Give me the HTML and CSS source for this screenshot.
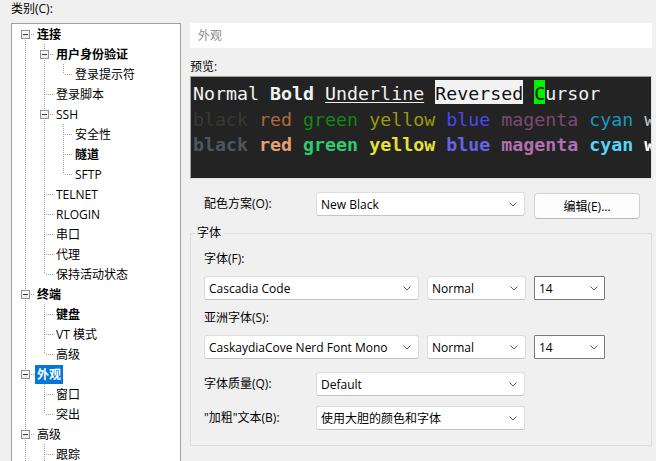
FILE: index.html
```html
<!DOCTYPE html>
<html lang="zh">
<head>
<meta charset="utf-8">
<link rel="stylesheet" href="styles.css">
</head>
<body>
<div class="app">
  <div class="left">
    <div class="cat-label">类别(C):</div>
    <div class="tree">
      <div class="row"><span class="c first"><i class="box"></i></span><span class="t b">连接</span></div>
      <div class="row"><span class="c pipe"></span><span class="c tee"><i class="box"></i></span><span class="t b">用户身份验证</span></div>
      <div class="row"><span class="c pipe"></span><span class="c pipe"></span><span class="c elbow"></span><span class="t">登录提示符</span></div>
      <div class="row"><span class="c pipe"></span><span class="c tee"></span><span class="t">登录脚本</span></div>
      <div class="row"><span class="c pipe"></span><span class="c tee"><i class="box"></i></span><span class="t">SSH</span></div>
      <div class="row"><span class="c pipe"></span><span class="c pipe"></span><span class="c tee"></span><span class="t">安全性</span></div>
      <div class="row"><span class="c pipe"></span><span class="c pipe"></span><span class="c tee"></span><span class="t b">隧道</span></div>
      <div class="row"><span class="c pipe"></span><span class="c pipe"></span><span class="c elbow"></span><span class="t">SFTP</span></div>
      <div class="row"><span class="c pipe"></span><span class="c tee"></span><span class="t">TELNET</span></div>
      <div class="row"><span class="c pipe"></span><span class="c tee"></span><span class="t">RLOGIN</span></div>
      <div class="row"><span class="c pipe"></span><span class="c tee"></span><span class="t">串口</span></div>
      <div class="row"><span class="c pipe"></span><span class="c tee"></span><span class="t">代理</span></div>
      <div class="row"><span class="c pipe"></span><span class="c elbow"></span><span class="t">保持活动状态</span></div>
      <div class="row"><span class="c tee"><i class="box"></i></span><span class="t b">终端</span></div>
      <div class="row"><span class="c pipe"></span><span class="c tee"></span><span class="t b">键盘</span></div>
      <div class="row"><span class="c pipe"></span><span class="c tee"></span><span class="t">VT 模式</span></div>
      <div class="row"><span class="c pipe"></span><span class="c elbow"></span><span class="t">高级</span></div>
      <div class="row"><span class="c tee"><i class="box"></i></span><span class="t b sel">外观</span></div>
      <div class="row"><span class="c pipe"></span><span class="c tee"></span><span class="t">窗口</span></div>
      <div class="row"><span class="c pipe"></span><span class="c elbow"></span><span class="t">突出</span></div>
      <div class="row"><span class="c tee"><i class="box"></i></span><span class="t">高级</span></div>
      <div class="row"><span class="c pipe"></span><span class="c tee"></span><span class="t">跟踪</span></div>
    </div>
  </div>

  <div class="right">
    <div class="title">外观</div>
    <div class="plabel">预览:</div>
    <div class="preview">
      <div class="pl">Normal <b>Bold</b> <u>Underline</u> <span class="rev">Reversed</span> <span class="cur">C</span>ursor</div>
      <div class="pl"><span class="n-k">black</span> <span class="n-r">red</span> <span class="n-g">green</span> <span class="n-y">yellow</span> <span class="n-b">blue</span> <span class="n-m">magenta</span> <span class="n-c">cyan</span> <span class="n-w">white</span></div>
      <div class="pl bold"><span class="b-k">black</span> <span class="b-r">red</span> <span class="b-g">green</span> <span class="b-y">yellow</span> <span class="b-b">blue</span> <span class="b-m">magenta</span> <span class="b-c">cyan</span> <span class="b-w">white</span></div>
    </div>

    <div class="scheme-row">
      <span class="lbl">配色方案(O):</span>
      <div class="dd w-scheme"><span>New Black</span><svg class="chev" width="8" height="5" viewBox="0 0 8 5"><polyline points="0.5,0.5 4,4 7.5,0.5" fill="none" stroke="#5c5c5c" stroke-width="1"/></svg></div>
      <button class="btn">编辑(E)...</button>
    </div>

    <fieldset class="group">
      <legend>字体</legend>
      <div class="flabel">字体(F):</div>
      <div class="frow">
        <div class="dd w-font"><span>Cascadia Code</span><svg class="chev" width="8" height="5" viewBox="0 0 8 5"><polyline points="0.5,0.5 4,4 7.5,0.5" fill="none" stroke="#5c5c5c" stroke-width="1"/></svg></div>
        <div class="dd w-style"><span>Normal</span><svg class="chev" width="8" height="5" viewBox="0 0 8 5"><polyline points="0.5,0.5 4,4 7.5,0.5" fill="none" stroke="#5c5c5c" stroke-width="1"/></svg></div>
        <div class="combo"><span>14</span><svg class="chev" width="8" height="5" viewBox="0 0 8 5"><polyline points="0.5,0.5 4,4 7.5,0.5" fill="none" stroke="#5c5c5c" stroke-width="1"/></svg></div>
      </div>
      <div class="flabel gap2">亚洲字体(S):</div>
      <div class="frow">
        <div class="dd w-font"><span>CaskaydiaCove Nerd Font Mono</span><svg class="chev" width="8" height="5" viewBox="0 0 8 5"><polyline points="0.5,0.5 4,4 7.5,0.5" fill="none" stroke="#5c5c5c" stroke-width="1"/></svg></div>
        <div class="dd w-style"><span>Normal</span><svg class="chev" width="8" height="5" viewBox="0 0 8 5"><polyline points="0.5,0.5 4,4 7.5,0.5" fill="none" stroke="#5c5c5c" stroke-width="1"/></svg></div>
        <div class="combo"><span>14</span><svg class="chev" width="8" height="5" viewBox="0 0 8 5"><polyline points="0.5,0.5 4,4 7.5,0.5" fill="none" stroke="#5c5c5c" stroke-width="1"/></svg></div>
      </div>
      <div class="irow q">
        <span class="lbl">字体质量(Q):</span>
        <div class="dd w-scheme"><span>Default</span><svg class="chev" width="8" height="5" viewBox="0 0 8 5"><polyline points="0.5,0.5 4,4 7.5,0.5" fill="none" stroke="#5c5c5c" stroke-width="1"/></svg></div>
      </div>
      <div class="irow bt">
        <span class="lbl">"加粗"文本(B):</span>
        <div class="dd w-scheme"><span>使用大胆的颜色和字体</span><svg class="chev" width="8" height="5" viewBox="0 0 8 5"><polyline points="0.5,0.5 4,4 7.5,0.5" fill="none" stroke="#5c5c5c" stroke-width="1"/></svg></div>
      </div>
    </fieldset>
  </div>
</div>
</body>
</html>
```

FILE: styles.css
```css
html, body {
  margin: 0;
  padding: 0;
}
body {
  background: #f0f0f0;
  font-family: "Open Sans", "Noto Sans CJK SC", sans-serif;
  font-size: 12px;
  color: #000;
  width: 656px;
  height: 461px;
  overflow: hidden;
}
.app {
  display: flex;
  gap: 9px;
  padding: 0 4px 0 11px;
}

/* ---------- left tree ---------- */
.left {
  width: 170px;
  flex: none;
  display: flex;
  flex-direction: column;
}
.cat-label {
  line-height: 18px;
  height: 18px;
  margin-left: 0;
}
.tree {
  margin-top: 5px;
  height: 460px;
  background: #fff;
  border: 1px solid #a0a0a0;
  box-sizing: border-box;
  padding-left: 6px;
}
.row {
  display: flex;
  height: 20px;
  align-items: center;
}
.c {
  position: relative;
  width: 19px;
  height: 20px;
  flex: none;
}
.c::before,
.c::after {
  content: "";
  position: absolute;
}
.pipe::before,
.tee::before,
.elbow::before,
.first::before {
  left: 7px;
  width: 1px;
  background: repeating-linear-gradient(to bottom, #a0a0a0 0 1px, transparent 1px 2px);
}
.pipe::before,
.tee::before {
  top: 0;
  bottom: 0;
}
.elbow::before {
  top: 0;
  height: 10px;
}
.first::before {
  top: 10px;
  bottom: 0;
}
.tee::after,
.elbow::after,
.first::after {
  left: 8px;
  top: 10px;
  width: 9px;
  height: 1px;
  background: repeating-linear-gradient(to right, transparent 0 1px, #a0a0a0 1px 2px);
}
.box {
  position: absolute;
  left: 3px;
  top: 6px;
  width: 9px;
  height: 9px;
  box-sizing: border-box;
  border: 1px solid #919191;
  background: linear-gradient(#fdfdfd, #e9e9e9);
  z-index: 1;
}
.box::after {
  content: "";
  position: absolute;
  left: 1px;
  top: 3px;
  width: 5px;
  height: 1px;
  background: #2a3a5a;
}
.t {
  margin-left: -2px;
  padding: 0 2px;
  line-height: 19px;
  height: 19px;
  margin-top: 1px;
  white-space: nowrap;
}
.t.b {
  font-weight: 700;
}
.t.sel {
  background: #0078d7;
  color: #fff;
}

/* ---------- right panel ---------- */
.right {
  width: 462px;
  flex: none;
  padding-top: 23px;
  display: flex;
  flex-direction: column;
}
.title {
  height: 25px;
  line-height: 25px;
  background: #fff;
  color: #8c8c8c;
  padding-left: 8px;
}
.plabel {
  margin-top: 10px;
  line-height: 18px;
  height: 18px;
}
.preview {
  height: 103px;
  box-sizing: border-box;
  background: #232323;
  border: 1px solid #a0a0a0;
  border-right-color: #e3e3e3;
  border-bottom-color: #e3e3e3;
  padding: 4px 0 0 2px;
  overflow: hidden;
  font-family: "DejaVu Sans Mono", monospace;
  font-size: 18.3px;
  line-height: 25.5px;
  color: #f2f2f2;
}
.pl {
  white-space: pre;
}
.pl.bold {
  font-weight: 700;
}
.preview u {
  text-decoration-thickness: 1px;
  text-underline-offset: 2px;
}
.rev {
  background: #f2f2f2;
  color: #111;
  padding-top: 3px;
}
.cur {
  background: #00f000;
  color: #111;
  padding-top: 3px;
}
.n-k { color: #3a3935; }
.n-r { color: #b0683c; }
.n-g { color: #0e8a16; }
.n-y { color: #9a9a0c; }
.n-b { color: #4848f0; }
.n-m { color: #7c4a72; }
.n-c { color: #1799c0; }
.n-w { color: #c8c8c8; }
.b-k { color: #50575c; }
.b-r { color: #e6a070; }
.b-g { color: #2ecc71; }
.b-y { color: #e6e03a; }
.b-b { color: #6464e6; }
.b-m { color: #b070b0; }
.b-c { color: #55d6f5; }
.b-w { color: #ffffff; }

.scheme-row {
  margin-top: 13px;
  padding-left: 14px;
  display: flex;
  align-items: flex-start;
}
.lbl {
  width: 112px;
  flex: none;
  line-height: 24px;
  white-space: nowrap;
}
.dd,
.combo {
  height: 24px;
  box-sizing: border-box;
  background: #fff;
  display: flex;
  align-items: center;
  justify-content: space-between;
  padding: 0 4px 0 4px;
  white-space: nowrap;
  flex: none;
}
.dd {
  border: 1px solid #dcdcdc;
  border-bottom-color: #c4c4c4;
  border-radius: 3px;
}
.dd .chev {
  margin-right: 3px;
  flex: none;
}
.combo {
  border: 1px solid #7a7a7a;
  border-radius: 1px;
}
.combo .chev {
  margin-right: 2px;
  flex: none;
}
.w-scheme { width: 209px; }
.w-font { width: 215px; }
.w-style { width: 99px; }
.combo { width: 71px; }
.btn {
  margin-left: 9px;
  margin-top: 1px;
  width: 106px;
  height: 26px;
  box-sizing: border-box;
  background: #fdfdfd;
  border: 1px solid #d0d0d0;
  border-bottom-color: #b8b8b8;
  border-radius: 4px;
  font: inherit;
  color: #000;
  padding: 0;
}

.group {
  margin: 6px 0 0;
  border: 1px solid #dcdcdc;
  padding: 0 13px 15px 13px;
  min-width: 0;
}
.group legend {
  padding: 0 2px;
  margin-left: -9px;
  line-height: 16px;
}
.flabel {
  margin-top: 9px;
  line-height: 18px;
  height: 18px;
}
.frow {
  margin-top: 8px;
  display: flex;
  gap: 8px;
}
.irow {
  display: flex;
}
.irow.q { margin-top: 13px; }
.irow.bt { margin-top: 10px; }
```
